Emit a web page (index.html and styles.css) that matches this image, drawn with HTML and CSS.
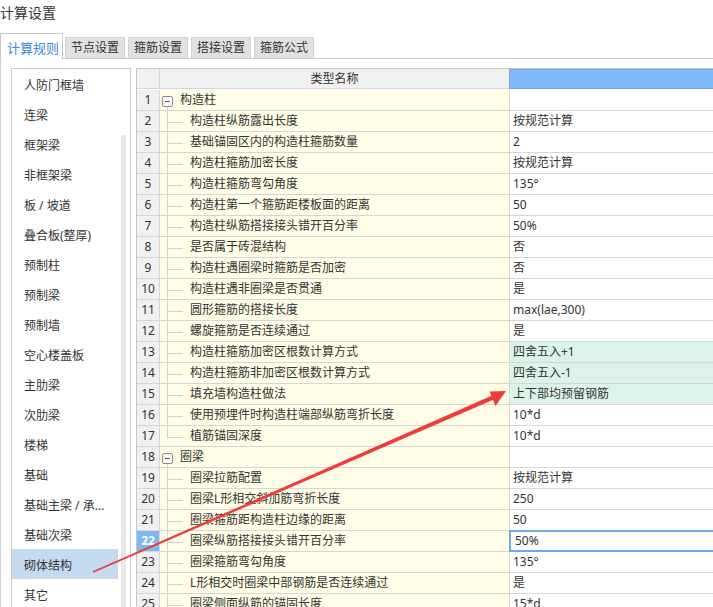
FILE: index.html
```html
<!DOCTYPE html>
<html lang="zh">
<head>
<meta charset="utf-8">
<title>计算设置</title>
<link rel="stylesheet" href="styles.css">
</head>
<body>
<div class="page">
  <div class="title">计算设置</div>
  <div class="tabs">
    <div class="tab active">计算规则</div>
    <div class="tab">节点设置</div>
    <div class="tab">箍筋设置</div>
    <div class="tab">搭接设置</div>
    <div class="tab">箍筋公式</div>
  </div>
  <div class="pane">
    <div class="list">
      <div class="items">
        <div class="item">人防门框墙</div>
        <div class="item">连梁</div>
        <div class="item">框架梁</div>
        <div class="item">非框架梁</div>
        <div class="item">板 / 坡道</div>
        <div class="item">叠合板(整厚)</div>
        <div class="item">预制柱</div>
        <div class="item">预制梁</div>
        <div class="item">预制墙</div>
        <div class="item">空心楼盖板</div>
        <div class="item">主肋梁</div>
        <div class="item">次肋梁</div>
        <div class="item">楼梯</div>
        <div class="item">基础</div>
        <div class="item">基础主梁 / 承...</div>
        <div class="item">基础次梁</div>
        <div class="item sel">砌体结构</div>
        <div class="item">其它</div>
      </div>
      <div class="scroll"></div>
    </div>
    <div class="grid">
      <div class="row head"><div class="num"></div><div class="name">类型名称</div><div class="val"></div></div>
      <div class="row"><div class="num">1</div><div class="name"><span class="tog"></span><span class="gtext">构造柱</span></div><div class="val"></div></div>
      <div class="row"><div class="num">2</div><div class="name"><span class="twig"></span><span class="ctext">构造柱纵筋露出长度</span></div><div class="val">按规范计算</div></div>
      <div class="row"><div class="num">3</div><div class="name"><span class="twig"></span><span class="ctext">基础锚固区内的构造柱箍筋数量</span></div><div class="val">2</div></div>
      <div class="row"><div class="num">4</div><div class="name"><span class="twig"></span><span class="ctext">构造柱箍筋加密长度</span></div><div class="val">按规范计算</div></div>
      <div class="row"><div class="num">5</div><div class="name"><span class="twig"></span><span class="ctext">构造柱箍筋弯勾角度</span></div><div class="val">135°</div></div>
      <div class="row"><div class="num">6</div><div class="name"><span class="twig"></span><span class="ctext">构造柱第一个箍筋距楼板面的距离</span></div><div class="val">50</div></div>
      <div class="row"><div class="num">7</div><div class="name"><span class="twig"></span><span class="ctext">构造柱纵筋搭接接头错开百分率</span></div><div class="val">50%</div></div>
      <div class="row"><div class="num">8</div><div class="name"><span class="twig"></span><span class="ctext">是否属于砖混结构</span></div><div class="val">否</div></div>
      <div class="row"><div class="num">9</div><div class="name"><span class="twig"></span><span class="ctext">构造柱遇圈梁时箍筋是否加密</span></div><div class="val">否</div></div>
      <div class="row"><div class="num">10</div><div class="name"><span class="twig"></span><span class="ctext">构造柱遇非圈梁是否贯通</span></div><div class="val">是</div></div>
      <div class="row"><div class="num">11</div><div class="name"><span class="twig"></span><span class="ctext">圆形箍筋的搭接长度</span></div><div class="val">max(lae,300)</div></div>
      <div class="row"><div class="num">12</div><div class="name"><span class="twig"></span><span class="ctext">螺旋箍筋是否连续通过</span></div><div class="val">是</div></div>
      <div class="row"><div class="num">13</div><div class="name"><span class="twig"></span><span class="ctext">构造柱箍筋加密区根数计算方式</span></div><div class="val green">四舍五入+1</div></div>
      <div class="row"><div class="num">14</div><div class="name"><span class="twig"></span><span class="ctext">构造柱箍筋非加密区根数计算方式</span></div><div class="val green">四舍五入-1</div></div>
      <div class="row"><div class="num">15</div><div class="name"><span class="twig"></span><span class="ctext">填充墙构造柱做法</span></div><div class="val green">上下部均预留钢筋</div></div>
      <div class="row"><div class="num">16</div><div class="name"><span class="twig"></span><span class="ctext">使用预埋件时构造柱端部纵筋弯折长度</span></div><div class="val">10*d</div></div>
      <div class="row"><div class="num">17</div><div class="name"><span class="twig last"></span><span class="ctext">植筋锚固深度</span></div><div class="val">10*d</div></div>
      <div class="row"><div class="num">18</div><div class="name"><span class="tog"></span><span class="gtext">圈梁</span></div><div class="val"></div></div>
      <div class="row"><div class="num">19</div><div class="name"><span class="twig"></span><span class="ctext">圈梁拉筋配置</span></div><div class="val">按规范计算</div></div>
      <div class="row"><div class="num">20</div><div class="name"><span class="twig"></span><span class="ctext">圈梁L形相交斜加筋弯折长度</span></div><div class="val">250</div></div>
      <div class="row"><div class="num">21</div><div class="name"><span class="twig"></span><span class="ctext">圈梁箍筋距构造柱边缘的距离</span></div><div class="val">50</div></div>
      <div class="row"><div class="num cur">22</div><div class="name"><span class="twig"></span><span class="ctext">圈梁纵筋搭接接头错开百分率</span></div><div class="val edit">50%</div></div>
      <div class="row"><div class="num">23</div><div class="name"><span class="twig"></span><span class="ctext">圈梁箍筋弯勾角度</span></div><div class="val">135°</div></div>
      <div class="row"><div class="num">24</div><div class="name"><span class="twig"></span><span class="ctext">L形相交时圈梁中部钢筋是否连续通过</span></div><div class="val">是</div></div>
      <div class="row"><div class="num">25</div><div class="name"><span class="twig"></span><span class="ctext">圈梁侧面纵筋的锚固长度</span></div><div class="val">15*d</div></div>
    </div>
  </div>
  <svg class="arrow" width="713" height="607" viewBox="0 0 713 607">
    <polygon points="92.7,571.3 492.1,395.4 493.9,399.6 93.3,572.7" fill="#ee3b3b"/>
    <polygon points="506,391 489.5,391.5 495.5,406" fill="#ee3b3b"/>
  </svg>
</div>
</body>
</html>
```

FILE: styles.css
```css
html, body {
  margin: 0;
  padding: 0;
  background: #fff;
}
body {
  font-family: "Noto Sans", "Noto Sans CJK SC", sans-serif;
  font-size: 12px;
  color: #333;
}
.page {
  position: relative;
  width: 713px;
  height: 607px;
  overflow: hidden;
}
.title {
  height: 33px;
  line-height: 25px;
  font-size: 14px;
  color: #333;
}
.tabs {
  display: flex;
  align-items: flex-end;
  height: 26px;
  box-sizing: border-box;
  border-bottom: 1px solid #c9c9c9;
}
.tab {
  box-sizing: border-box;
  width: 60px;
  height: 21px;
  margin-right: 3px;
  background: #e1e1e1;
  border: 1px solid #d2d2d2;
  border-bottom: none;
  text-align: center;
  line-height: 20px;
  font-size: 12px;
  color: #333;
  white-space: nowrap;
}
.tab.active {
  width: 63px;
  height: 26px;
  margin-bottom: -1px;
  margin-right: 2px;
  padding-left: 3px;
  padding-top: 3px;
  line-height: 22px;
  background: #fff;
  border-color: #c9c9c9;
  color: #3a86d6;
  font-size: 13px;
}
.pane {
  display: flex;
  height: 548px;
  box-sizing: border-box;
  border-left: 1px solid #d0d0d0;
  padding: 9px 0 0 10px;
  gap: 5px;
}
.list {
  flex: none;
  width: 120px;
  height: 560px;
  box-sizing: border-box;
  border: 1px solid #c9c9c9;
  display: flex;
}
.items {
  width: 106px;
  flex: none;
}
.item {
  box-sizing: border-box;
  height: 30px;
  padding-top: 4px;
  line-height: 26px;
  padding-left: 12px;
  white-space: nowrap;
  overflow: hidden;
}
.item.sel {
  background: #c3daf0;
}
.scroll {
  flex: none;
  width: 5px;
  margin-left: 3px;
  margin-top: 66px;
  background: #e8e8e8;
}
.grid {
  flex: none;
  width: 640px;
  border-left: 1px solid #c6c6c6;
  border-top: 1px solid #c6c6c6;
}
.row {
  display: flex;
  height: 21px;
}
.row > div {
  box-sizing: border-box;
  height: 21px;
  line-height: 20px;
  border-right: 1px solid #d6d6d6;
  border-bottom: 1px solid #d6d6d6;
  white-space: nowrap;
  overflow: hidden;
}
.num {
  flex: none;
  width: 23px;
  background: #f0f0f0;
  text-align: center;
}
.num.cur {
  background: #7cb7f4;
  color: #fff;
  font-weight: bold;
}
.name {
  flex: none;
  width: 350px;
  background: #fffde7;
  display: flex;
  align-items: stretch;
}
.val {
  flex: none;
  width: 260px;
  padding-left: 3px;
  background: #fff;
}
.val.green {
  background: #dcf3e9;
}
.row > .val.edit {
  position: relative;
  padding-left: 5px;
  overflow: visible;
}
.val.edit::after {
  content: "";
  position: absolute;
  top: -1px;
  left: -1px;
  right: 0;
  bottom: -1px;
  border: 2px solid #6ea9e6;
}
.row.head > div {
  height: 20px;
  line-height: 19px;
  background: #f0f0f0;
}
.row.head .name {
  justify-content: center;
}
.row.head > .val {
  position: relative;
  overflow: visible;
  background: #80bbf7;
}
.row.head > .val::after {
  content: "";
  position: absolute;
  top: 0;
  left: -1px;
  right: 0;
  bottom: -1px;
  border: 1px solid #6aa6e8;
}
.tog {
  position: relative;
  flex: none;
  width: 11px;
  height: 11px;
  box-sizing: border-box;
  margin: 6px 0 0 2px;
  border: 1px solid #8c8c8c;
  border-radius: 2px;
  background: linear-gradient(#555, #555) center / 5px 1px no-repeat, #fff;
}
.tog::after {
  content: "";
  position: absolute;
  left: 4px;
  top: 10px;
  width: 1px;
  height: 5px;
  background: #d0d0d0;
}
.gtext {
  margin-left: 7px;
}
.twig {
  flex: none;
  width: 16px;
  margin-left: 7px;
  background:
    linear-gradient(#d0d0d0, #d0d0d0) 0 0 / 1px 100% no-repeat,
    linear-gradient(#d0d0d0, #d0d0d0) 0 11px / 100% 1px no-repeat;
}
.twig.last {
  background:
    linear-gradient(#d0d0d0, #d0d0d0) 0 0 / 1px 12px no-repeat,
    linear-gradient(#d0d0d0, #d0d0d0) 0 11px / 100% 1px no-repeat;
}
.ctext {
  margin-left: 7px;
}
.arrow {
  position: absolute;
  left: 0;
  top: 0;
  pointer-events: none;
}
```
